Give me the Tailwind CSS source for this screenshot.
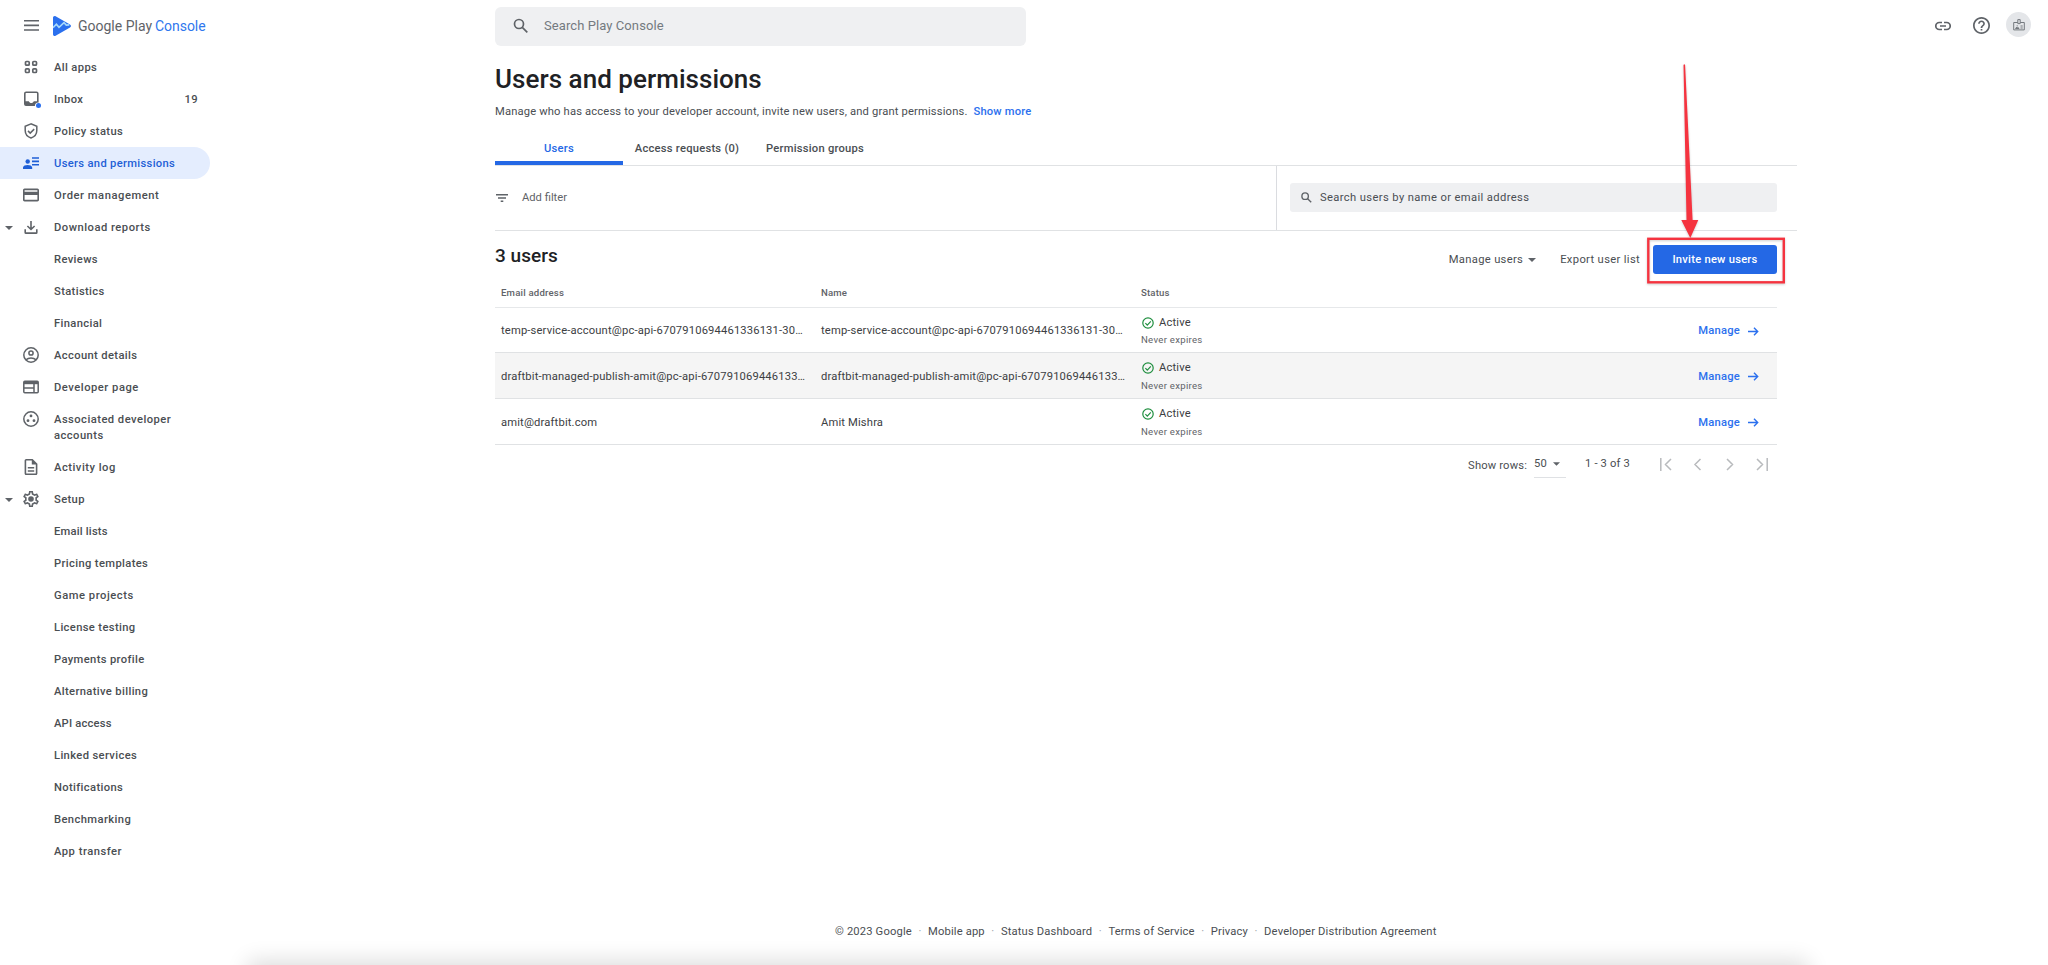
<!DOCTYPE html>
<html lang="en">

<head>
    <meta charset="UTF-8" />
    <meta name="viewport" content="width=device-width, initial-scale=1.0" />
    <title>Users and permissions | Google Play Console</title>
    <script src="https://cdn.jsdelivr.net/npm/@tailwindcss/browser@4"></script>
</head>

<body class="relative flex h-[965px] flex-col overflow-hidden bg-white font-['Roboto',sans-serif] text-[11.2px] leading-4 tracking-[0.16px] text-[#4a4e52]">

    <!-- Header -->
    <header class="flex h-[51px] shrink-0 items-start">
        <div class="flex h-[51px] w-[495px] items-center pl-6">
            <svg class="h-[11px] w-[15px]" viewBox="0 0 15 11" fill="#5f6368"><path d="M0 0h15v1.600H0zM0 4.600h15v1.600H0zM0 9.200h15v1.600H0z" /></svg>
            <svg class="ml-3.5 h-5 w-[18px]" viewBox="0 0 18 20">
                <path d="M0 1.800C0 .4 1.400-.4 2.600.3l14.400 8.200c1.300.7 1.300 2.300 0 3L2.600 19.700C1.400 20.400 0 19.600 0 18.200z" fill="#2b70ee" />
                <path d="M0 11.600L3.400 8.200l2.600 3.100 5-4.700 2.300 2.500 3-.2" fill="none" stroke="#a8dafb" stroke-width="1.600" />
            </svg>
            <span class="ml-[7px] text-sm tracking-normal text-[#5f6368]">Google Play</span>
            <span class="ml-[3px] text-sm tracking-[-0.05px] text-[#2f77ee]">Console</span>
        </div>
        <div class="mt-[7px] flex h-[39px] w-[531px] items-center rounded-md bg-[#eff0f2] pb-0.5 pl-[18px]">
            <svg class="size-4" viewBox="0 0 16 16" fill="none" stroke="#5f6368" stroke-width="1.700"><circle cx="6" cy="6" r="4.500" /><path d="M9.300 9.300l5 5" /></svg>
            <span class="ml-[15px] text-[13px] tracking-[0.08px] text-[#747a80]">Search Play Console</span>
        </div>
        <div class="ml-auto flex items-center pt-3 pr-[17px]">
            <svg class="mt-0.5 mr-[22px] size-4" viewBox="0 0 16 16" fill="none" stroke="#5f6368" stroke-width="1.700"><path d="M7 4.500H4.300a3.500 3.500 0 0 0 0 7H7M9 4.500h2.700a3.500 3.500 0 0 1 0 7H9M5 8h6" /></svg>
            <svg class="mt-0.5 mr-4 size-[17px]" viewBox="2 2 20 20" fill="#5f6368"><path d="M11 18h2v-2h-2v2zm1-16C6.480 2 2 6.480 2 12s4.480 10 10 10 10-4.480 10-10S17.520 2 12 2zm0 18c-4.410 0-8-3.590-8-8s3.590-8 8-8 8 3.590 8 8-3.590 8-8 8zm0-14c-2.210 0-4 1.790-4 4h2c0-1.100.9-2 2-2s2 .9 2 2c0 2-3 1.750-3 5h2c0-2.250 3-2.500 3-5 0-2.210-1.790-4-4-4z" /></svg>
            <div class="flex size-[25px] items-center justify-center rounded-full bg-[#e4e6e9]">
                <svg class="size-3" viewBox="0 0 12 12" fill="none" stroke="#74797e" stroke-width="1"><path d="M4.800 3.500H.7v7.400h10.600V3.500H7.200M4.800.6h2.400v4H4.800zM7.500 7h2.200M7.500 9h2.200" /><path d="M2.500 9.500c0-1.500 3.500-1.500 3.500 0zM3.700 6.800h1" /></svg>
            </div>
        </div>
    </header>

    <div class="flex flex-1">
        <!-- Sidebar -->
        <nav class="w-[210px] font-medium tracking-[0.36px]">
            <a class="flex h-8 items-center pl-[23px]">
                <svg class="mr-[15px] size-4" viewBox="0 0 16 16" fill="none" stroke="#5f6368" stroke-width="1.700"><rect x="2.500" y="2.500" width="3.700" height="3.700" rx="1" /><rect x="9.800" y="2.500" width="3.700" height="3.700" rx="1" /><rect x="2.500" y="9.800" width="3.700" height="3.700" rx="1" /><rect x="9.800" y="9.800" width="3.700" height="3.700" rx="1" /></svg>
                <span class="pt-0.5">All apps</span>
            </a>
            <a class="flex h-8 items-center pl-[23px]">
                <svg class="mr-[13px] h-[17px] w-[18px]" viewBox="0 0 18 17"><rect x="1.800" y="1.300" width="13" height="13" rx="1.300" fill="none" stroke="#5f6368" stroke-width="1.600" /><path d="M2 10.300h3.800c.5 1.200 1.400 1.800 2.500 1.800s2-.6 2.500-1.800h3.800v4H2z" fill="#5f6368" /><circle cx="15.500" cy="15" r="3.600" fill="#fff" /><circle cx="15.500" cy="14.500" r="2.500" fill="#2b70ee" /></svg>
                <span class="pt-0.5">Inbox</span>
                <span class="ml-auto pt-0.5 pr-3">19</span>
            </a>
            <a class="flex h-8 items-center pl-[23px]">
                <svg class="mr-[15px] size-4" viewBox="0 0 16 16" fill="none" stroke="#5f6368" stroke-width="1.500"><path d="M8 .9L2.200 3.200v4.300c0 3.600 2.400 6.300 5.800 7.500 3.400-1.200 5.800-3.900 5.800-7.500V3.200z" /><path d="M5 7.900l2.200 2.200 4-4" /></svg>
                <span class="pt-0.5">Policy status</span>
            </a>
            <a class="flex h-8 items-center rounded-r-full bg-[#e4edfe] pl-[23px] text-[#1f5fd6]">
                <svg class="mr-[15px] size-4" viewBox="0 0 16 16" fill="#1f5fd6"><circle cx="4.700" cy="6.500" r="2.200" /><path d="M0 14v-1.500C0 10.800 2.500 10 4.600 10s4.600.8 4.600 2.500V14zM9 2.200h7v1.600H9zM9 5.600h7v1.600H9zM9 9h7v1.600H9z" /></svg>
                <span class="pt-0.5 tracking-[0.32px]">Users and permissions</span>
            </a>
            <a class="flex h-8 items-center pl-[23px]">
                <svg class="mr-[15px] size-4" viewBox="2 2 20 20" fill="#5f6368"><path d="M20 4H4c-1.110 0-1.990.89-1.990 2L2 18c0 1.110.89 2 2 2h16c1.110 0 2-.89 2-2V6c0-1.110-.89-2-2-2zm0 14H4v-6h16v6zm0-10H4V6h16v2z" /></svg>
                <span class="pt-0.5 tracking-[0.54px]">Order management</span>
            </a>
            <a class="flex h-8 items-center pl-[5px]">
                <svg class="mt-0.5 mr-[10px] h-1 w-2" viewBox="0 0 8 4" fill="#5f6368"><path d="M0 0h8L4 4z" /></svg>
                <svg class="mr-[15px] size-4" viewBox="0 0 16 16" fill="none" stroke="#5f6368" stroke-width="1.600"><path d="M8 2v8.300M4.400 7L8 10.500 11.600 7M2.200 10.200v3.200c0 .4.300.7.700.7h10.200c.4 0 .7-.3.700-.7v-3.200" /></svg>
                <span class="pt-0.5 tracking-[0.5px]">Download reports</span>
            </a>
            <a class="flex h-8 items-center pt-0.5 pl-[54px]"><span>Reviews</span></a>
            <a class="flex h-8 items-center pt-0.5 pl-[54px]"><span>Statistics</span></a>
            <a class="flex h-8 items-center pt-0.5 pl-[54px]"><span>Financial</span></a>
            <a class="flex h-8 items-center pl-[23px]">
                <svg class="mr-[15px] size-4" viewBox="0 0 16 16" fill="none" stroke="#5f6368" stroke-width="1.500"><circle cx="8" cy="8" r="7.200" /><circle cx="8" cy="6" r="2.100" /><path d="M2.800 12.800c3-2.500 7.400-2.500 10.400 0" /></svg>
                <span class="pt-0.5">Account details</span>
            </a>
            <a class="flex h-8 items-center pl-[23px]">
                <svg class="mr-[15px] size-4" viewBox="0 0 16 16" fill="none" stroke="#5f6368" stroke-width="1.500"><rect x=".8" y="2.200" width="14.400" height="11.600" rx="1" /><path d="M1 3.700h14" stroke-width="3" /><path d="M1 9h9.500M11 4v10" /></svg>
                <span class="pt-0.5 tracking-[0.52px]">Developer page</span>
            </a>
            <a class="flex h-12 items-start pt-2 pl-[23px]">
                <svg class="mr-[15px] size-4" viewBox="0 0 16 16" fill="#5f6368"><circle cx="8" cy="8" r="7.200" fill="none" stroke="#5f6368" stroke-width="1.500" /><circle cx="8" cy="4.900" r="1.400" /><circle cx="5" cy="9.700" r="1.400" /><circle cx="11" cy="9.700" r="1.400" /></svg>
                <span class="pt-px tracking-[0.46px]">Associated developer<br />accounts</span>
            </a>
            <a class="flex h-8 items-center pl-[23px]">
                <svg class="mr-[15px] size-4" viewBox="2 2 20 20" fill="#5f6368"><path d="M8 16h8v2H8zm0-4h8v2H8zm6-10H6c-1.100 0-2 .9-2 2v16c0 1.100.89 2 1.990 2H18c1.100 0 2-.9 2-2V8l-6-6zm4 18H6V4h7v5h5v11z" /></svg>
                <span class="pt-0.5 tracking-[0.5px]">Activity log</span>
            </a>
            <a class="flex h-8 items-center pl-[5px]">
                <svg class="mt-0.5 mr-[10px] h-1 w-2" viewBox="0 0 8 4" fill="#5f6368"><path d="M0 0h8L4 4z" /></svg>
                <svg class="mr-[15px] size-4" viewBox="2 2 20 20" fill="#5f6368"><path d="M19.430 12.980c.04-.32.07-.64.07-.98 0-.34-.03-.66-.07-.98l2.110-1.650c.19-.15.24-.42.12-.64l-2-3.460c-.09-.16-.26-.25-.44-.25-.06 0-.12.01-.17.03l-2.490 1c-.52-.4-1.080-.73-1.690-.98l-.38-2.650C14.460 2.180 14.250 2 14 2h-4c-.25 0-.46.18-.49.42l-.38 2.650c-.61.25-1.170.59-1.690.98l-2.490-1c-.06-.02-.12-.03-.18-.03-.17 0-.34.09-.43.25l-2 3.460c-.13.22-.07.49.12.64l2.110 1.650c-.04.32-.07.65-.07.98 0 .33.03.66.07.98l-2.110 1.650c-.19.15-.24.42-.12.64l2 3.460c.09.16.26.25.44.25.06 0 .12-.01.17-.03l2.490-1c.52.4 1.080.73 1.690.98l.38 2.650c.03.24.24.42.49.42h4c.25 0 .46-.18.49-.42l.38-2.650c.61-.25 1.170-.59 1.690-.98l2.490 1c.06.02.12.03.18.03.17 0 .34-.09.43-.25l2-3.460c.12-.22.07-.49-.12-.64l-2.110-1.650zm-1.980-1.710c.04.31.05.52.05.73 0 .21-.02.43-.05.73l-.14 1.130.89.7 1.080.84-.7 1.210-1.270-.51-1.040-.42-.9.68c-.43.32-.84.56-1.250.73l-1.060.43-.16 1.130-.2 1.350h-1.400l-.19-1.350-.16-1.130-1.060-.43c-.43-.18-.83-.41-1.230-.71l-.91-.7-1.060.43-1.270.51-.7-1.210 1.080-.84.89-.7-.14-1.130c-.03-.31-.05-.54-.05-.74s.02-.43.05-.73l.14-1.130-.89-.7-1.080-.84.7-1.210 1.270.51 1.040.42.9-.68c.43-.32.84-.56 1.250-.73l1.060-.43.16-1.130.2-1.350h1.390l.19 1.350.16 1.130 1.060.43c.43.18.83.41 1.230.71l.91.7 1.060-.43 1.270-.51.7 1.210-1.070.85-.89.7.14 1.130z" /><circle cx="12" cy="12" r="3.500" /></svg>
                <span class="pt-0.5">Setup</span>
            </a>
            <a class="flex h-8 items-center pt-0.5 pl-[54px] tracking-[0.2px]"><span>Email lists</span></a>
            <a class="flex h-8 items-center pt-0.5 pl-[54px]"><span>Pricing templates</span></a>
            <a class="flex h-8 items-center pt-0.5 pl-[54px] tracking-[0.54px]"><span>Game projects</span></a>
            <a class="flex h-8 items-center pt-0.5 pl-[54px]"><span>License testing</span></a>
            <a class="flex h-8 items-center pt-0.5 pl-[54px]"><span>Payments profile</span></a>
            <a class="flex h-8 items-center pt-0.5 pl-[54px]"><span>Alternative billing</span></a>
            <a class="flex h-8 items-center pt-0.5 pl-[54px] tracking-[0.2px]"><span>API access</span></a>
            <a class="flex h-8 items-center pt-0.5 pl-[54px]"><span>Linked services</span></a>
            <a class="flex h-8 items-center pt-0.5 pl-[54px]"><span>Notifications</span></a>
            <a class="flex h-8 items-center pt-0.5 pl-[54px] tracking-[0.4px]"><span>Benchmarking</span></a>
            <a class="flex h-8 items-center pt-0.5 pl-[54px] tracking-[0.5px]"><span>App transfer</span></a>
        </nav>

        <!-- Content -->
        <main class="ml-[285px] flex w-[1302px] flex-col pt-2">
            <h1 class="text-[26px] leading-10 font-medium tracking-[0.04px] text-[#202124]">Users and permissions</h1>
            <p class="mt-[5px] flex h-4 items-center gap-1.5">
                <span>Manage who has access to your developer account, invite new users, and grant permissions.</span>
                <span class="font-medium tracking-[0.16px] text-[#2b70ee]">Show more</span>
            </p>

            <!-- Tabs -->
            <div class="mt-[13px] flex h-[33px] border-b border-[#e0e2e4] text-center leading-8 font-medium tracking-[0.24px]">
                <div class="w-32 border-b-4 border-[#2468e5] text-[#2468e5]">Users</div>
                <div class="w-32">Access requests (0)</div>
                <div class="w-32">Permission groups</div>
            </div>

            <!-- Filter bar -->
            <div class="flex h-[65px] items-center border-b border-[#e0e2e4]">
                <div class="flex h-full w-[782px] items-center border-r border-[#dadce0] pl-px text-[#5f6368]">
                    <svg class="mr-[14px] h-2 w-3" viewBox="0 0 12 8" fill="#5f6368"><path d="M0 0h12v1.400H0zM2 3.300h8v1.400H2zM4.700 6.600h2.600V8H4.700z" /></svg>
                    <span class="tracking-normal">Add filter</span>
                </div>
                <div class="mb-px ml-[13px] flex h-[29px] w-[487px] items-center rounded-[3px] bg-[#eff0f2] pl-[11px]">
                    <svg class="mr-2 size-[11px]" viewBox="0 0 16 16" fill="none" stroke="#5f6368" stroke-width="2"><circle cx="6" cy="6" r="4.700" /><path d="M9.300 9.300l5.500 5.500" /></svg>
                    <span class="pt-px tracking-[0.38px]">Search users by name or email address</span>
                </div>
            </div>

            <!-- List actions -->
            <div class="flex h-[53px] w-[1282px] items-center pt-1">
                <h2 class="mb-[7px] flex-1 text-[19px] font-medium tracking-[0.05px] text-[#202124]">3 users</h2>
                <span class="tracking-[0.32px]">Manage users</span>
                <svg class="mr-6 ml-[5px] h-1 w-2" viewBox="0 0 8 4" fill="#5f6368"><path d="M0 0h8L4 4z" /></svg>
                <span class="tracking-[0.34px]">Export user list</span>
                <button class="ml-[13px] h-[29px] w-[124px] rounded-[3px] bg-[#2468e5] font-medium tracking-[0.24px] text-white">Invite new users</button>
            </div>

            <!-- Users table -->
            <div class="w-[1282px] text-[#3c4043]">
                <div class="flex h-6 items-start border-b border-[#e6e8ea] pt-px pl-1.5 text-[9.6px] font-medium text-[#5f6368]">
                    <div class="w-80 tracking-[0.2px]">Email address</div>
                    <div class="w-80">Name</div>
                    <div>Status</div>
                </div>
                <div id="userRows"></div>
            </div>

            <!-- Pagination -->
            <div class="flex h-[38px] w-[1282px] items-center justify-end">
                <span class="pt-[3px] pr-[7px]">Show rows:</span>
                <div class="flex h-[27px] w-8 items-center border-b border-[#dfe1e4]">
                    <span>50</span>
                    <svg class="ml-1.5 h-1 w-[7px]" viewBox="0 0 8 4" fill="#5f6368"><path d="M0 0h8L4 4z" /></svg>
                </div>
                <span class="ml-[19px] w-[75px]">1 - 3 of 3</span>
                <svg class="mr-[9px] h-[13px] w-[108px]" viewBox="0 0 108 13" fill="none" stroke="#b8babd" stroke-width="1.500"><path d="M.8 0v13M11 1L5.500 6.500 11 12M40.500 1L35 6.500l5.500 5.500M67 1l5.500 5.500L67 12M97 1l5.500 5.500L97 12M107.200 0v13" /></svg>
            </div>

            <!-- Footer -->
            <footer class="mt-auto mb-[25px] flex gap-[6.5px] pl-[340px]">
                <span>© 2023 Google</span>
                <i class="text-[#9aa0a6] not-italic">·</i>
                <span>Mobile app</span>
                <i class="text-[#9aa0a6] not-italic">·</i>
                <span>Status Dashboard</span>
                <i class="text-[#9aa0a6] not-italic">·</i>
                <span>Terms of Service</span>
                <i class="text-[#9aa0a6] not-italic">·</i>
                <span>Privacy</span>
                <i class="text-[#9aa0a6] not-italic">·</i>
                <span>Developer Distribution Agreement</span>
            </footer>
        </main>
    </div>

    <!-- Shade along the bottom edge -->
    <div class="absolute top-full right-[244px] left-[252px] h-10 shadow-[0_0_22px_4px_rgba(0,0,0,0.14)]"></div>

    <!-- Callout: box and arrow -->
    <svg class="absolute top-[60px] left-[1640px] h-[230px] w-[150px] drop-shadow-[0_1px_1px_rgba(0,0,0,0.2)]" viewBox="1640 60 150 230">
        <rect x="1648.300" y="238.800" width="135.500" height="43.500" fill="none" stroke="#f5333f" stroke-width="2.400" />
        <path d="M1683.500 65q.8-1.500 1.600 0L1692.600 220h5.700L1690.300 238 1681.300 220h5.200z" fill="#f5333f" />
    </svg>

    <script>
        const users = [
            { email: "temp-service-account@pc-api-6707910694461336131-30…", name: "temp-service-account@pc-api-6707910694461336131-30…", row: "h-[45px] bg-white" },
            { email: "draftbit-managed-publish-amit@pc-api-670791069446133…", name: "draftbit-managed-publish-amit@pc-api-670791069446133…", row: "h-[46px] bg-[#f5f5f5]" },
            { email: "amit@draftbit.com", name: "Amit Mishra", row: "h-[46px] bg-white" },
        ];

        document.getElementById("userRows").innerHTML = users.map((user) => `
            <div class="flex items-center border-b border-[#e0e2e4] pt-0.5 pl-1.5 ${user.row}">
                <div class="w-80 whitespace-nowrap">${user.email}</div>
                <div class="w-80 whitespace-nowrap">${user.name}</div>
                <div class="flex-1">
                    <div class="flex h-[17px] items-center">
                        <svg class="mr-[5px] ml-[1px] size-3" viewBox="0 0 12 12" fill="none" stroke="#1e8e3e" stroke-width="1.200"><circle cx="6" cy="6" r="5.200" /><path d="M3.400 6.200l1.900 1.900 3.500-3.700" /></svg>
                        <span>Active</span>
                    </div>
                    <div class="h-[17px] text-[9.6px] leading-[18px] tracking-[0.28px] text-[#5f6368]">Never expires</div>
                </div>
                <span class="font-medium tracking-[0.24px] text-[#2b70ee]">Manage</span>
                <svg class="mr-[18px] ml-2 h-[9px] w-[11px]" viewBox="0 0 11 9" fill="none" stroke="#2b70ee" stroke-width="1.400"><path d="M0 4.500h9.500M6 .8l3.700 3.700L6 8.200" /></svg>
            </div>`).join("");
    </script>
</body>

</html>
